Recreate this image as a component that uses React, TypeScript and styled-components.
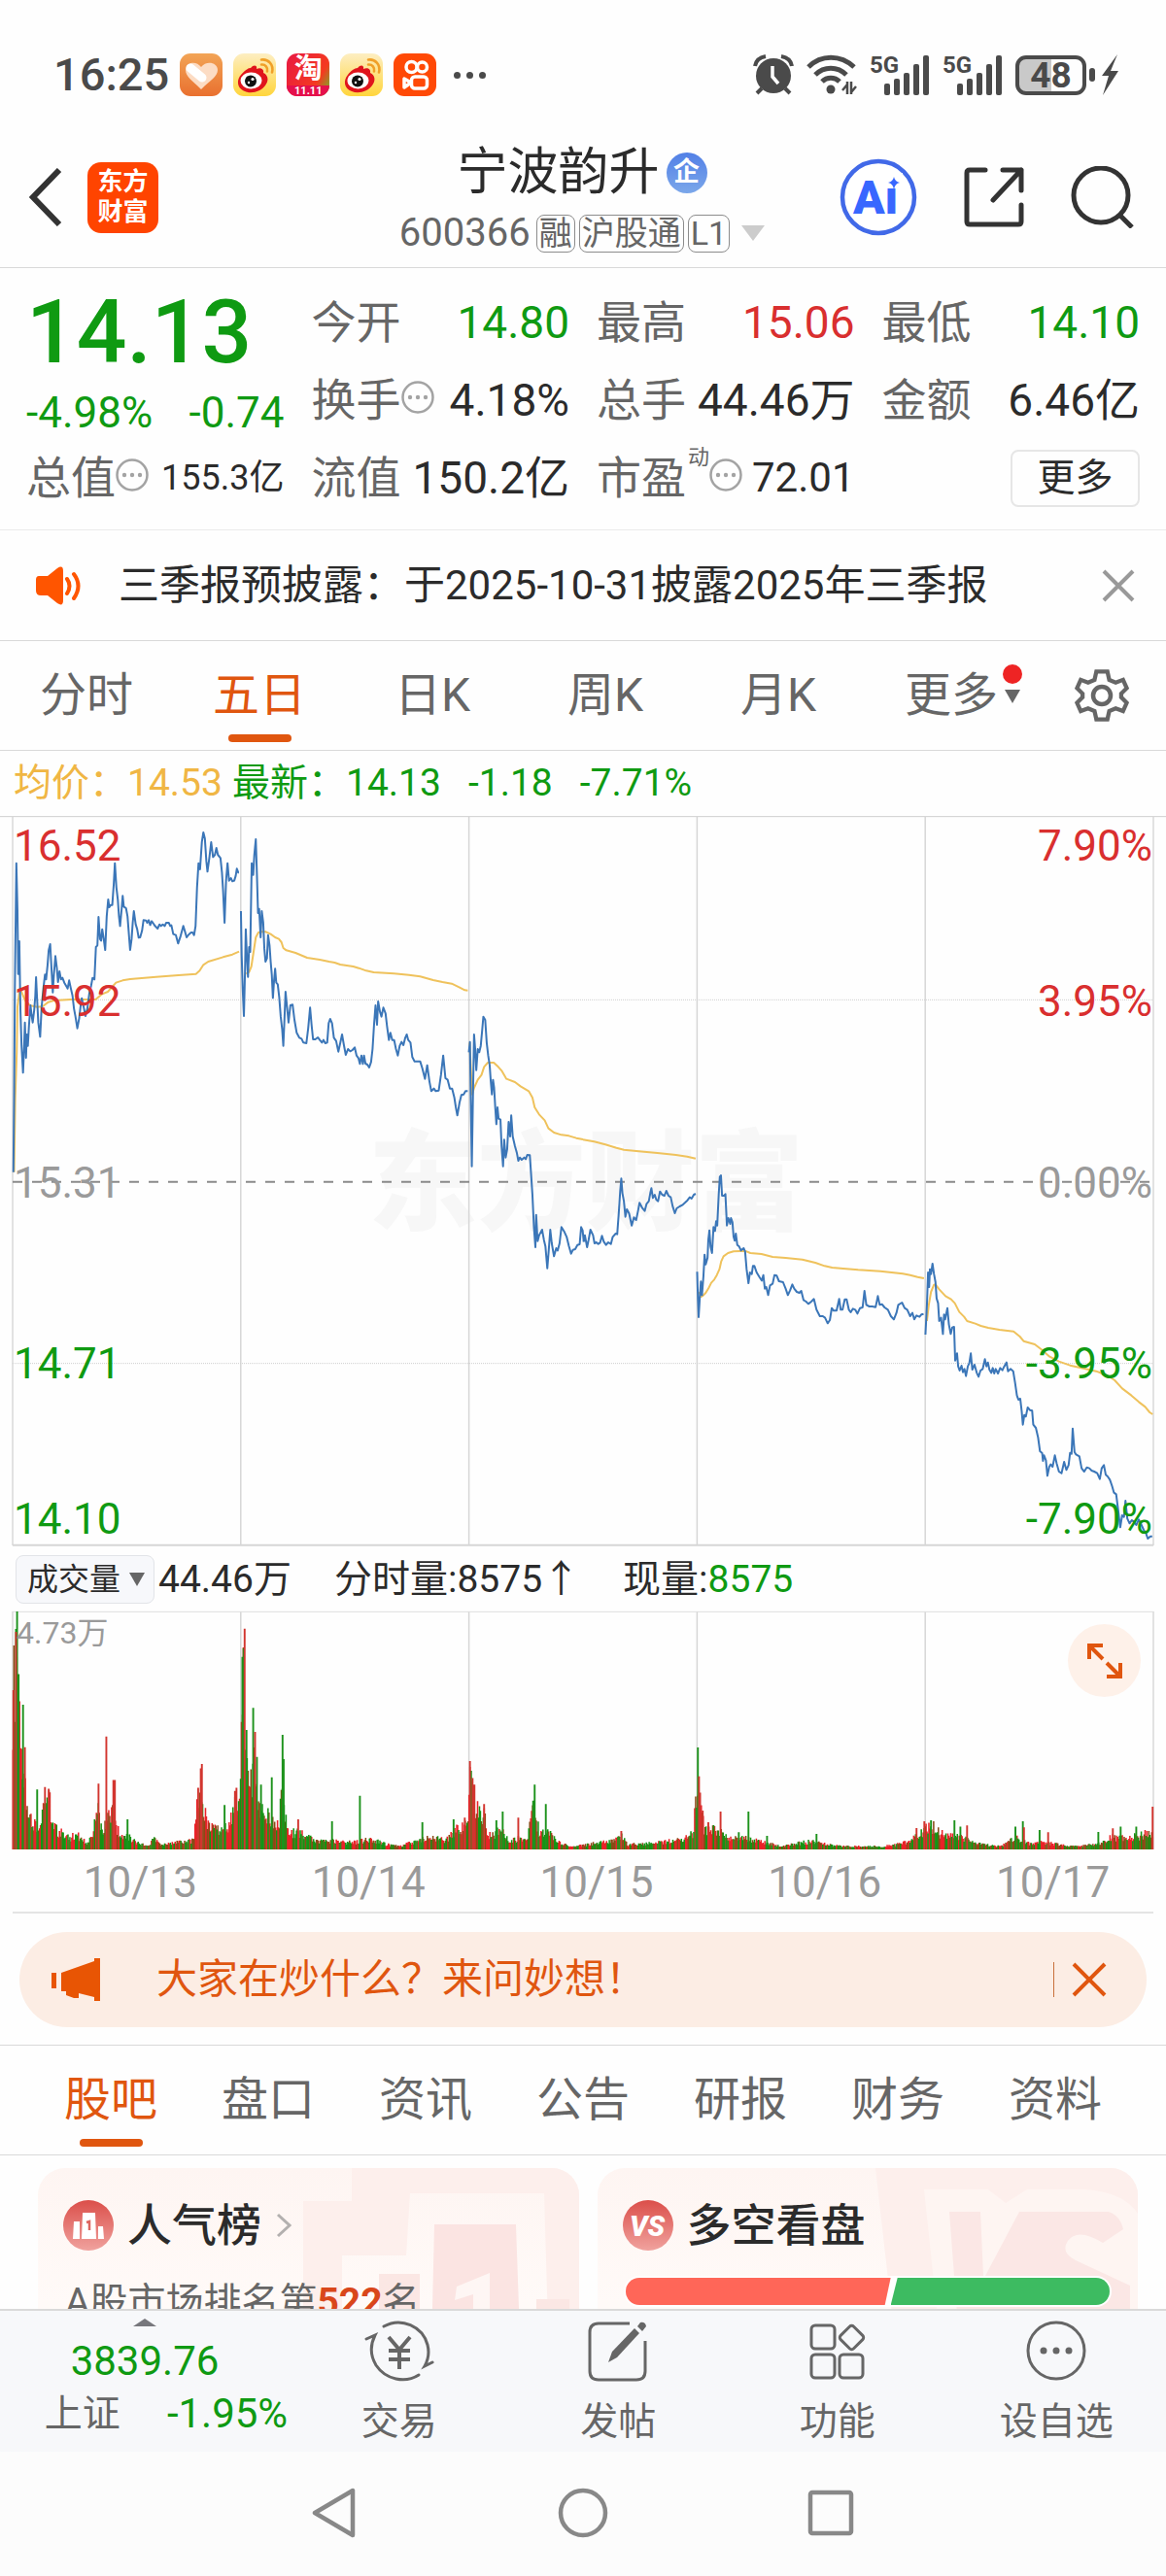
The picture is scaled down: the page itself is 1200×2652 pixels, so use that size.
import React from 'react';
import styled, { createGlobalStyle, css } from 'styled-components';

const color = {
  up: '#d92f2f',
  down: '#0f9a12',
  ink: '#2b2b2b',
  label: '#666666',
  muted: '#9a9a9a',
  line: '#d9d9d9',
  accent: '#e0560f',
  price: '#3b76b8',
  average: '#efc25c',
};

const GlobalStyle = createGlobalStyle`
  * { box-sizing: border-box; }
  body {
    margin: 0;
    background: #fefefe;
    color: ${color.ink};
    font-family: Roboto, "Noto Sans CJK SC", sans-serif;
  }
  button, select { font: inherit; color: inherit; }
  button { border: 0; padding: 0; background: none; cursor: pointer; }
  svg { display: block; flex: none; }
`;

const Page = styled.div`
  display: flex;
  flex-direction: column;
  height: 100vh;
  overflow: hidden;
`;

const Row = styled.div<{ $gap?: number }>`
  display: flex;
  align-items: center;
  gap: ${(p) => p.$gap ?? 0}px;
`;

/* ---------- status bar ---------- */

const StatusBar = styled.header`
  display: flex;
  flex: none;
  justify-content: space-between;
  align-items: center;
  padding: 55px 49px 32px 55px;
  height: 131px;
  color: #4a4a4a;
`;

const Clock = styled.time`
  font-size: 47px;
  line-height: 44px;
  font-weight: 500;
`;

const AppTile = styled.span<{ $bg: string }>`
  display: flex;
  flex-direction: column;
  align-items: center;
  width: 44px;
  height: 44px;
  border-radius: 11px;
  overflow: hidden;
  color: #fff;
  background: ${(p) => p.$bg};
`;

const TileGlyph = styled.span`
  font-size: 29px;
  line-height: 33px;
  font-weight: 700;
`;

const TileCaption = styled.span`
  width: 100%;
  background: #e5104c;
  font-size: 11px;
  line-height: 11px;
  font-weight: 700;
  text-align: center;
`;

const Dots = styled.span`
  display: flex;
  gap: 6px;
  margin-left: 7px;
  i { width: 7px; height: 7px; border-radius: 50%; background: #4a4a4a; }
`;

const Signal = styled.span`
  display: flex;
  position: relative;
  width: 62px;
  height: 41px;
  align-items: flex-start;
  svg { position: absolute; inset: 0; }
`;

const SignalText = styled.span`
  font-size: 24px;
  line-height: 20px;
  font-weight: 700;
`;

const Battery = styled.span`
  display: flex;
  align-items: center;
  justify-content: center;
  width: 73px;
  height: 41px;
  border: 4px solid #4a4a4a;
  border-radius: 11px;
  background: linear-gradient(90deg, #c9c9c9 50%, transparent 50%);
  font-size: 37px;
  line-height: 33px;
  font-weight: 700;
`;

const WeiboTile = () => (
  <AppTile $bg="linear-gradient(#fdeec2, #ffd53c)">
    <svg width="44" height="44" viewBox="0 0 44 44">
      <path d="M18 15c3-4 7-3 6 1 4-2 8 0 7 4 5 2 6 8 2 13-4 6-14 9-21 6-8-3-9-11-4-17 3-4 7-7 10-7z" fill="#e0141c" />
      <ellipse cx="18.500" cy="28" rx="11" ry="8.500" fill="#fff" />
      <circle cx="18" cy="28.500" r="6" fill="#111" />
      <circle cx="20" cy="26.500" r="1.600" fill="#fff" />
      <circle cx="16" cy="30" r="1.200" fill="#fff" />
      <path d="M29 11.500c4-.5 7 3 6 7M29 6.500c7-1 13 5 11 13" fill="none" stroke="#f0a028" strokeWidth="2.600" strokeLinecap="round" />
    </svg>
  </AppTile>
);

const SignalBars = () => (
  <Signal>
    <SignalText>5G</SignalText>
    <svg width="62" height="41" viewBox="0 0 62 41" fill="#4a4a4a">
      <rect x="15" y="29" width="6" height="12" rx="2" />
      <rect x="25" y="24" width="6" height="17" rx="2" />
      <rect x="35" y="18" width="6" height="23" rx="2" />
      <rect x="45" y="9" width="6" height="32" rx="2" />
      <rect x="55" y="0" width="6" height="41" rx="2" />
    </svg>
  </Signal>
);

/* ---------- title bar ---------- */

const TitleBar = styled.div`
  display: grid;
  flex: none;
  grid-template-columns: 1fr auto 1fr;
  align-items: center;
  height: 145px;
  padding: 0 32px 0 30px;
  border-bottom: 1px solid ${color.line};
`;

const Logo = styled.a`
  display: flex;
  width: 73px;
  height: 73px;
  align-items: center;
  justify-content: center;
  border-radius: 14px;
  background: #ff4400;
  color: #fff;
  font-size: 26px;
  line-height: 31px;
  font-weight: 700;
  text-align: center;
  text-decoration: none;
`;

const TitleBlock = styled.div`
  display: flex;
  flex-direction: column;
  align-items: center;
  padding-top: 12px;
`;

const StockName = styled.h1`
  margin: 0;
  font-size: 52px;
  line-height: 62px;
  font-weight: 400;
`;

const CorpBadge = styled.span`
  width: 42px;
  height: 42px;
  border-radius: 50%;
  background: linear-gradient(#5280e6, #7ba7ea);
  color: #fff;
  font-size: 27px;
  line-height: 40px;
  font-weight: 700;
  text-align: center;
`;

const Code = styled.span`
  font-size: 40px;
  line-height: 62px;
  color: ${color.label};
  margin-right: 2px;
`;

const Mark = styled.span`
  padding: 0 2px;
  border: 1px solid #8c8c8c;
  border-radius: 8px;
  color: ${color.label};
  font-size: 34px;
  line-height: 37px;
`;

const Triangle = styled.i<{ $w: number; $h: number; $color: string }>`
  border-left: ${(p) => p.$w}px solid transparent;
  border-right: ${(p) => p.$w}px solid transparent;
  border-top: ${(p) => p.$h}px solid ${(p) => p.$color};
`;

const Actions = styled.div`
  display: flex;
  justify-content: flex-end;
  align-items: center;
  gap: 48px;
`;

/* ---------- quote ---------- */

const Quote = styled.section`
  display: grid;
  flex: none;
  grid-template-columns: repeat(4, 1fr);
  grid-auto-rows: 80px;
  column-gap: 28px;
  padding: 16px 27px 13px;
  border-bottom: 1px solid #ebebeb;
`;

const Headline = styled.div`
  grid-row: span 2;
  color: ${color.down};
`;

const Price = styled.div`
  font-size: 91px;
  line-height: 100px;
  font-weight: 500;
`;

const Change = styled.div`
  display: flex;
  justify-content: space-between;
  font-size: 44px;
  line-height: 66px;
`;

const Cell = styled.div`
  display: flex;
  align-items: center;
  white-space: nowrap;
`;

const Label = styled.span`
  color: ${color.label};
  font-size: 46px;
  line-height: 60px;
`;

const Value = styled.span<{ $color?: string; $size?: number }>`
  margin-left: auto;
  color: ${(p) => p.$color ?? color.ink};
  font-size: ${(p) => p.$size ?? 46}px;
  line-height: 60px;
`;

const Sup = styled.sup`
  align-self: flex-start;
  margin-left: 2px;
  color: ${color.label};
  font-size: 22px;
  line-height: 38px;
`;

const MoreButton = styled.button`
  width: 133px;
  height: 59px;
  margin-left: auto;
  border: 2px solid #e6e6e6;
  border-radius: 8px;
  font-size: 39px;
  line-height: 52px;
`;

const InfoIcon = styled.svg`
  margin-bottom: 6px;
`;

const Info = () => (
  <InfoIcon width="34" height="34" viewBox="0 0 34 34">
    <circle cx="17" cy="17" r="15.500" fill="none" stroke="#a3a3a3" strokeWidth="2.500" />
    <g fill="#a3a3a3">
      <circle cx="9" cy="17" r="2.200" /><circle cx="17" cy="17" r="2.200" /><circle cx="25" cy="17" r="2.200" />
    </g>
  </InfoIcon>
);

/* ---------- notice ---------- */

const Notice = styled.div`
  display: flex;
  flex: none;
  align-items: center;
  height: 114px;
  padding: 0 32px 0 36px;
  border-bottom: 1px solid ${color.line};
  font-size: 42px;
  line-height: 60px;
  p { flex: 1; margin: 0 0 0 36px; white-space: nowrap; }
`;

/* ---------- tabs ---------- */

const Tabs = styled.nav<{ $pad?: number }>`
  display: flex;
  flex: none;
  height: 113px;
  padding: 0 ${(p) => p.$pad ?? 0}px;
  border-bottom: 1px solid ${color.line};
`;

const Tab = styled.button<{ $on?: boolean }>`
  display: flex;
  flex: 1;
  align-items: center;
  justify-content: center;
  position: relative;
  color: ${color.label};
  font-size: 48px;
  line-height: 60px;
  ${(p) =>
    p.$on &&
    css`
      color: ${color.accent};
      &::after {
        content: '';
        position: absolute;
        bottom: 8px;
        left: 50%;
        width: 65px;
        height: 8px;
        margin-left: -32px;
        border-radius: 4px;
        background: ${color.accent};
      }
    `}
`;

const SettingsTab = styled.button`
  display: flex;
  align-items: center;
  justify-content: center;
  width: 132px;
`;

const MoreMarks = styled.span`
  position: absolute;
  left: 50%;
  top: 24px;
  display: flex;
  flex-direction: column;
  align-items: center;
  gap: 6px;
  margin-left: 53px;
`;

const RedDot = styled.i`
  width: 20px;
  height: 20px;
  border-radius: 50%;
  background: #ee2424;
`;

/* ---------- chart ---------- */

const Legend = styled.div`
  display: flex;
  flex: none;
  gap: 10px;
  height: 68px;
  padding: 0 14px;
  color: ${color.down};
  font-size: 39px;
  line-height: 66px;
  b { color: #f0b644; font-weight: 400; }
  span + span { margin-left: 18px; }
`;

const Plot = styled.div<{ $height: number }>`
  position: relative;
  flex: none;
  height: ${(p) => p.$height}px;
  margin: 0 13px;
  svg.plot { position: absolute; inset: 0; width: 100%; height: 100%; overflow: visible; }
`;

const Watermark = styled.div`
  position: absolute;
  inset: 0;
  display: flex;
  align-items: center;
  justify-content: center;
  padding: 8px 0 0 6px;
  color: #f7f7f7;
  font-size: 112px;
  line-height: 120px;
  font-weight: 900;
`;

const AxisLabel = styled.span<{ $side: 'left' | 'right'; $color: string }>`
  position: absolute;
  ${(p) => p.$side}: 1px;
  transform: translateY(-50%);
  color: ${(p) => p.$color};
  font-size: 44px;
  line-height: 48px;
`;

const VolumeHead = styled.div`
  display: flex;
  flex: none;
  align-items: center;
  height: 68px;
  padding: 2px 16px 0;
  font-size: 39px;
  line-height: 60px;
  white-space: nowrap;
  em { color: ${color.down}; font-style: normal; }
  span { margin-right: 44px; }
`;

const Picker = styled.label`
  position: relative;
  display: flex;
  margin-right: 4px;
  i { position: absolute; right: 10px; top: 18px; pointer-events: none; }
`;

const PickerSelect = styled.select`
  appearance: none;
  width: 143px;
  height: 50px;
  padding: 0 0 0 11px;
  border: 1px solid #e2e4e8;
  border-radius: 8px;
  background: #f7f8fb;
  font-size: 32px;
  line-height: 46px;
`;

const VolumeMax = styled.span`
  position: absolute;
  left: 4px;
  top: 4px;
  color: ${color.muted};
  font-size: 32px;
  line-height: 36px;
`;

const ExpandButton = styled.button`
  position: absolute;
  right: 13px;
  top: 13px;
  display: flex;
  align-items: center;
  justify-content: center;
  width: 75px;
  height: 75px;
  border-radius: 50%;
  background: #fef1e9;
`;

const Dates = styled.div`
  display: flex;
  flex: none;
  height: 66px;
  margin: 0 13px;
  border-bottom: 2px solid #e4e4e4;
  span {
    flex: 1;
    padding-left: 28px;
    color: ${color.muted};
    font-size: 44px;
    line-height: 68px;
    text-align: center;
  }
`;

const DAYS = ['10/13', '10/14', '10/15', '10/16', '10/17'];

const AXIS = [
  { price: '16.52', pct: '7.90%', at: 4, color: color.up },
  { price: '15.92', pct: '3.95%', at: 25.3, color: color.up },
  { price: '15.31', pct: '0.00%', at: 50.2, color: color.muted },
  { price: '14.71', pct: '-3.95%', at: 75.1, color: color.down },
  { price: '14.10', pct: '-7.90%', at: 96.4, color: color.down },
];

// Both halves of the week are stored relative to their own origin; the second one is shifted when drawn.
const PRICE_A = [
  '36,1670 38,1440 40,1100 44,716 47,860 49,1058 52,957 55,1170 58,1280 62,1363 65,1280 67,1208 70,1317 72,1245 75,1280 78,1217 82,1155 85,1185 88,1208 92,1170 95,1125 97,1068 100,1140 103,1208 108,1252 112,1160 117,1100 121,1060 124,1075 128,1030 131,985 135,966 138,1030 142,1115 145,1060 149,1003 153,1040 156,1083 160,1050 164,1075 168,1070 173,1085 178,1095 182,1103 186,1078 190,1100 195,1125 199,1165 203,1190 208,1226 213,1195 217,1155 220,1133 225,1160 230,1188 235,1165 240,1120 245,1095 249,1070 254,1075 258,975 262,970 265,882 269,950 272,955 275,920 279,950 283,984 287,880 291,828 294,852 298,845 302,845 306,780 309,716 313,790 317,830 320,880 323,910 327,860 330,817 333,850 339,855 343,880 347,940 350,984 354,950 357,900 360,864 365,905 369,920 373,946 377,945 382,925 386,892 393,893 396,900 400,892 404,907 408,895 413,903 417,910 424,918 429,905 433,910 438,905 443,910 447,900 454,900 458,910 461,908 466,935 473,938 479,964 486,940 493,910 497,925 502,945 508,936 514,930 518,930 522,938 526,910 530,790 534,716 538,735 543,650 547,621 551,640 555,710 558,742 563,700 568,651 573,697 578,690 582,669 586,690 593,700 597,745 600,800 604,900 608,770 612,716 616,770 621,762 625,772 630,770 634,755 637,733 641,745 643,745',
  '648,864 650,1000 653,1110 656,1188 659,1050 661,920 664,1000 667,1067 670,975 673,990 677,716 681,752 684,690 688,642 691,750 694,870 697,857 701,945 704,864 708,900 711,980 714,1020 718,1010 721,938 725,970 728,1020 731,1060 734,1132 737,1080 740,1042 743,1085 747,1090 751,1130 755,1190 759,1230 762,1280 765,1200 768,1113 772,1160 776,1208 781,1155 787,1153 792,1200 798,1240 805,1255 811,1258 816,1270 824,1272 829,1225 834,1162 838,1215 842,1260 848,1260 855,1254 860,1262 866,1270 870,1262 875,1272 880,1270 884,1210 888,1197 893,1210 898,1255 904,1265 910,1298 915,1272 920,1245 925,1278 930,1308 936,1290 942,1297 948,1293 954,1285 959,1310 964,1318 968,1336 972,1310 976,1336 979,1310 983,1335 988,1338 993,1347 998,1330 1002,1290 1006,1215 1010,1155 1014,1215 1017,1143 1022,1175 1026,1190 1031,1162 1037,1180 1041,1220 1046,1262 1050,1240 1055,1262 1060,1262 1065,1290 1070,1310 1075,1280 1080,1268 1085,1278 1090,1255 1094,1245 1098,1262 1104,1270 1109,1315 1115,1328 1130,1328 1136,1350 1143,1382 1149,1340 1155,1390 1160,1420 1167,1412 1172,1420 1180,1418 1186,1370 1192,1310 1198,1380 1204,1385 1210,1412 1216,1412 1222,1440 1226,1470 1230,1495 1236,1455 1241,1432 1247,1430 1252,1420 1258,1420',
  '1261,1300 1264,1268 1266,1440 1269,1652 1272,1440 1275,1245 1278,1290 1281,1355 1285,1290 1289,1300 1293,1280 1297,1230 1300,1190 1305,1200 1309,1270 1313,1310 1317,1340 1320,1390 1323,1430 1326,1385 1329,1410 1332,1470 1335,1522 1338,1470 1341,1505 1346,1508 1349,1590 1353,1652 1356,1570 1360,1625 1364,1600 1368,1515 1372,1560 1375,1495 1379,1560 1385,1590 1390,1610 1394,1635 1398,1625 1403,1632 1410,1625 1414,1630 1418,1617 1425,1618 1428,1670 1432,1740 1436,1840 1440,1902 1442,1802 1446,1883 1450,1865 1458,1848 1463,1880 1467,1900 1472,1967 1476,1910 1480,1848 1484,1890 1490,1930 1496,1905 1500,1912 1505,1890 1510,1840 1518,1855 1524,1870 1530,1898 1536,1922 1541,1910 1547,1908 1553,1895 1559,1893 1563,1840 1567,1850 1570,1885',
];
const PRICE_B = [
  '2,445 5,425 11,462 15,440 20,408 27,425 31,450 36,447 41,452 46,448 51,427 56,445 62,455 68,447 75,452 80,430 88,420 92,422 96,360 100,290 103,250 106,295 110,320 114,368 118,345 124,358 131,395 137,370 143,378 148,350 152,325 159,340 166,350 171,328 177,320 181,295 184,280 188,310 193,300 197,315 202,320 207,290 213,300 219,303 224,288 230,303 236,308 241,335 247,357 252,342 260,336 267,332 274,325 281,317 287,308 292,312 298,300 303,297',
  '307,538 309,620 311,678 314,620 317,568 320,610 324,550 327,485 330,515 335,495 337,440 340,410 343,460 347,480 351,400 355,412 358,382 361,395 365,300 368,245 371,240 374,303 379,303 383,298 387,395 391,372 396,390 398,372 402,385 405,430 408,442 411,420 415,455 420,460 425,472 432,465 436,475 440,530 445,573 449,540 454,545 457,520 461,520 467,540 475,555 481,565 485,548 489,590 493,585 498,610 503,580 510,575 515,548 521,550 527,567 538,570 545,590 551,610 557,595 563,577 568,590 575,600 582,603 587,597 593,625 600,630 606,637 614,630 621,622 628,655 637,675 645,675 651,680 658,697 664,687 669,650 674,658 682,658 689,622 693,655 698,655 704,623 709,623 715,655 720,663 726,652 732,655 738,667 745,650 752,648 757,597 762,640 770,645 778,645 787,647 793,613 798,640 804,638 811,648 820,655 828,675 836,685 843,665 848,640 858,633 865,650 872,655 880,675 886,665 891,685 897,673 905,677 910,670 916,668',
  '921,732 925,640 928,540 931,585 933,530 936,545 940,513 944,545 948,570 951,620 955,635 958,690 963,680 968,730 971,670 974,685 980,650 984,700 989,730 993,710 998,708 1001,812 1006,790 1009,830 1013,843 1018,828 1022,848 1026,838 1030,860 1035,830 1039,820 1043,790 1047,840 1053,825 1059,850 1064,862 1069,843 1075,838 1081,808 1085,830 1089,818 1093,840 1098,850 1102,835 1106,852 1110,838 1116,852 1122,835 1128,842 1133,830 1139,818 1143,845 1150,838 1157,845 1162,880 1167,920 1171,933 1176,930 1180,970 1183,1010 1187,980 1191,985 1196,957 1202,965 1208,967 1211,1010 1218,1020 1224,1050 1229,1092 1235,1098 1237,1122 1240,1105 1245,1120 1249,1168 1254,1140 1258,1133 1263,1140 1269,1105 1274,1130 1280,1155 1287,1160 1294,1125 1300,1150 1306,1135 1310,1097 1314,1100 1317,1022 1322,1095 1326,1102 1335,1108 1341,1145 1348,1155 1355,1142 1362,1145 1368,1152 1375,1155 1383,1160 1390,1178 1395,1145 1401,1135 1406,1165 1411,1170 1417,1180 1423,1200 1428,1220 1434,1225 1440,1280 1445,1327 1450,1290 1455,1295 1459,1245 1464,1300 1470,1315 1476,1305 1482,1310 1488,1320 1495,1303 1502,1320 1508,1335 1514,1345 1519,1362 1526,1355 1531,1355',
];
const AVERAGE_A = [
  '38,1670 41,1440 45,1300 47,1160 52,1115 57,1110 62,1125 68,1140 80,1155 100,1160 115,1158 130,1145 145,1140 190,1137 257,1137 275,1120 290,1113 312,1085 330,1078 350,1074 420,1067 480,1062 527,1058 537,1048 547,1030 560,1020 600,1006 625,998 643,989',
  '662,1058 670,1052 676,1035 682,990 688,945 695,930 705,928 715,928 728,935 740,945 750,950 757,960 762,978 770,985 795,993 826,1008 860,1014 885,1020 900,1023 915,1029 950,1035 965,1040 985,1048 1005,1053 1060,1057 1100,1061 1130,1066 1165,1077 1190,1083 1215,1088 1235,1099 1250,1108 1258,1109',
  '1263,1270 1270,1430 1275,1410 1285,1385 1295,1370 1302,1345 1312,1332 1328,1332 1340,1345 1350,1358 1362,1382 1385,1392 1400,1405 1422,1420 1432,1440 1438,1470 1450,1492 1465,1510 1475,1535 1490,1548 1510,1555 1530,1558 1550,1565 1568,1569',
];
const AVERAGE_B = [
  '0,130 30,136 60,145 90,155 110,161 150,166 200,171 250,177 280,182 303,188',
  '312,600 318,615 324,610 330,603 338,588 345,572 353,562 360,548 367,530 372,505 378,490 390,480 405,475 425,474 440,475 450,480 480,483 510,492 545,495 590,500 625,510 650,520 670,525 700,528 740,532 800,536 830,540 860,544 880,548 900,554 917,558',
  '925,690 930,640 936,600 944,578 948,577 958,592 975,613 990,623 1000,635 1012,662 1025,677 1033,690 1055,698 1070,705 1090,711 1120,717 1158,722 1175,738 1185,752 1215,762 1232,777 1255,800 1280,815 1310,827 1340,835 1380,845 1410,858 1430,873 1450,898 1475,920 1495,940 1512,955 1524,972 1532,978',
];

const Series = ({ parts, stroke, width }: { parts: string[]; stroke: string; width: number }) => (
  <>
    {parts.map((p) => (
      <polyline key={p.slice(0, 12)} points={p} fill="none" stroke={stroke} strokeWidth={width} strokeLinejoin="round" vectorEffect="non-scaling-stroke" />
    ))}
  </>
);

const dividers = [1, 2, 3, 4].map((i) => 34 + i * 613.6);

const Grid = ({ top, bottom }: { top: number; bottom: number }) => (
  <g stroke="#d6d6d6" strokeWidth="1.500" fill="none">
    {dividers.map((x) => (
      <line key={x} x1={x} x2={x} y1={top} y2={bottom} vectorEffect="non-scaling-stroke" />
    ))}
    <line x1="34" x2="34" y1={top} y2={bottom} stroke="#e2e2e2" strokeWidth="2" vectorEffect="non-scaling-stroke" />
    <line x1="3102" x2="3102" y1={top} y2={bottom} stroke="#e2e2e2" strokeWidth="2" vectorEffect="non-scaling-stroke" />
  </g>
);

const PriceChart = () => (
  <Plot $height={750}>
    <Watermark aria-hidden="true">东方财富</Watermark>
    <svg className="plot" viewBox="34 573 3068 2250" preserveAspectRatio="none">
      <Grid top={573} bottom={2823} />
      <g strokeWidth="1" stroke="#cfcfcf">
        <line x1="0" x2="3136" y1="572" y2="572" vectorEffect="non-scaling-stroke" />
        <line x1="34" x2="3102" y1="1138" y2="1138" strokeDasharray="1 1" vectorEffect="non-scaling-stroke" />
        <line x1="34" x2="3102" y1="2261" y2="2261" strokeDasharray="1 1" vectorEffect="non-scaling-stroke" />
        <line x1="34" x2="3102" y1="1700" y2="1700" stroke="#8a8a8a" strokeWidth="2" strokeDasharray="10 10" vectorEffect="non-scaling-stroke" />
        <line x1="34" x2="3102" y1="2822" y2="2822" stroke="#d6d6d6" strokeWidth="2" vectorEffect="non-scaling-stroke" />
      </g>
      <Series parts={AVERAGE_A} stroke={color.average} width={2} />
      <Series parts={PRICE_A} stroke={color.price} width={2} />
      <g transform="translate(1568 1440)">
        <Series parts={AVERAGE_B} stroke={color.average} width={2} />
        <Series parts={PRICE_B} stroke={color.price} width={2} />
      </g>
    </svg>
    {AXIS.map((a) => (
      <React.Fragment key={a.price}>
        <AxisLabel $side="left" $color={a.color} style={{ top: `${a.at}%` }}>{a.price}</AxisLabel>
        <AxisLabel $side="right" $color={a.color} style={{ top: `${a.at}%` }}>{a.pct}</AxisLabel>
      </React.Fragment>
    ))}
  </Plot>
);

const ENVELOPE: [number, number][] = [
  [34, 490], [40, 620], [46, 640], [50, 430], [58, 340], [64, 310], [70, 200], [76, 110], [90, 90], [110, 85], [120, 160], [135, 150], [143, 70], [160, 60], [190, 40], [205, 50], [235, 20], [250, 60], [260, 150], [270, 90], [280, 70], [290, 110], [305, 130], [312, 80], [325, 45], [360, 35], [370, 20], [400, 15], [415, 35], [430, 15], [480, 25], [522, 30], [530, 150], [545, 150], [560, 80], [590, 60], [610, 70], [630, 130], [645, 190],
  [648, 400], [655, 560], [660, 330], [668, 200], [676, 230], [685, 310], [692, 190], [705, 120], [720, 110], [735, 90], [750, 80], [760, 240], [767, 100], [780, 50], [800, 60], [830, 40], [850, 25], [900, 30], [920, 25], [960, 25], [1000, 35], [1030, 20], [1075, 10], [1110, 25], [1150, 40], [1200, 30], [1225, 65], [1258, 80],
  [1262, 230], [1270, 210], [1280, 130], [1300, 120], [1315, 50], [1350, 60], [1370, 30], [1420, 40], [1435, 140], [1450, 60], [1480, 50], [1500, 25], [1530, 10], [1568, 15], [1610, 22], [1650, 28], [1672, 45], [1690, 15], [1750, 20], [1820, 30], [1840, 30], [1865, 60],
  [1875, 210], [1882, 140], [1895, 70], [1940, 60], [1960, 35], [2010, 35], [2050, 25], [2100, 10], [2170, 25], [2200, 25], [2240, 12], [2300, 10], [2370, 10], [2420, 18], [2450, 30], [2486, 60],
  [2489, 70], [2510, 75], [2540, 45], [2590, 40], [2620, 20], [2690, 10], [2730, 40], [2770, 20], [2800, 25], [2860, 14], [2900, 10], [2960, 20], [2990, 40], [3040, 40], [3080, 50], [3101, 60],
];

const SPIKES_DOWN: [number, number][] = [
  [46, 733], [50, 540], [62, 446], [100, 185], [130, 150], [343, 93], [604, 137], [652, 593], [655, 620], [663, 368], [681, 436], [691, 285], [731, 222], [760, 353], [763, 278], [702, 200], [893, 87], [968, 165], [1136, 84], [1220, 93], [1267, 242], [1335, 90], [1352, 117], [1438, 200], [1434, 150], [1468, 140], [1877, 314], [1987, 53], [2013, 117], [2063, 42], [2196, 48], [2504, 90], [2567, 90], [2583, 70], [2731, 70], [2751, 87], [2796, 60], [2954, 54], [3014, 70], [3056, 70],
];
const SPIKES_UP: [number, number][] = [
  [36, 491], [43, 670], [67, 315], [121, 192], [131, 187], [265, 203], [286, 348], [305, 214], [309, 214], [533, 190], [540, 250], [543, 263], [632, 180], [636, 190], [658, 680], [686, 362], [802, 93], [1250, 98], [1264, 272], [1271, 220], [1276, 200], [1302, 140], [1394, 98], [1671, 57], [1880, 225], [1883, 175], [1890, 120], [1905, 84], [1938, 117], [2465, 66], [2486, 87], [2601, 74], [2754, 68], [2819, 53], [2993, 65], [3100, 132],
];

const BASE = 941;
const bar = (x: number, h: number) => `M${x.toFixed(1)} ${BASE}v${-h.toFixed(0)}`;

function buildVolume() {
  let seed = 17;
  const rand = () => {
    seed = (seed * 16807) % 2147483647;
    return seed / 2147483647;
  };
  const layers = { up: '', down: '', mixed: '' };
  let k = 0;
  for (let x = 35; x < 3101; x += 2.55) {
    while (k < ENVELOPE.length - 2 && ENVELOPE[k + 1][0] < x) k += 1;
    const [x0, h0] = ENVELOPE[k];
    const [x1, h1] = ENVELOPE[k + 1];
    const base = h0 + ((h1 - h0) * (x - x0)) / (x1 - x0);
    const h = Math.max(7, base * (0.6 + rand() * 0.6));
    const pick = rand();
    layers[pick < 0.42 ? 'up' : pick < 0.76 ? 'down' : 'mixed'] += bar(x, h);
  }
  return layers;
}

const volume = buildVolume();
const joinBars = (list: [number, number][]) => list.map(([x, h]) => bar(x, h)).join('');

const VolumeChart = () => (
  <Plot $height={245}>
    <svg className="plot" viewBox="34 208 3068 733" preserveAspectRatio="none">
      <Grid top={208} bottom={941} />
      <line x1="34" x2="3102" y1="209" y2="209" stroke="#dedede" strokeWidth="1" vectorEffect="non-scaling-stroke" />
      <g fill="none" strokeWidth="4">
        <path d={volume.up} stroke="#ea2228" />
        <path d={volume.mixed} stroke="#8a4a16" />
        <path d={volume.down} stroke="#149413" />
        <path d={joinBars(SPIKES_DOWN)} stroke="#1d921c" strokeWidth="5" />
        <path d={joinBars(SPIKES_UP)} stroke="#d2352f" strokeWidth="5" />
      </g>
    </svg>
    <VolumeMax>4.73万</VolumeMax>
    <ExpandButton aria-label="全屏">
      <svg width="38" height="38" viewBox="0 0 38 38" fill="none" stroke={color.accent} strokeWidth="4">
        <path d="M3 17V3h14M3 3l14 14M35 21v14H21M35 35L21 21" />
      </svg>
    </ExpandButton>
  </Plot>
);

/* ---------- banner ---------- */

const Banner = styled.div`
  display: flex;
  flex: none;
  align-items: center;
  height: 98px;
  margin: 19px 20px 18px;
  padding: 0 41px 0 33px;
  border-radius: 49px;
  background: #fcede4;
  color: ${color.accent};
  font-size: 42px;
  line-height: 60px;
  a { flex: 1; margin-left: 58px; color: inherit; text-decoration: none; }
  button { padding-left: 18px; border-left: 1px solid #c9713c; }
`;

const Rule = styled.hr`
  flex: none;
  width: 100%;
  height: 1px;
  margin: 0;
  border: 0;
  background: ${color.line};
`;

/* ---------- cards ---------- */

const Cards = styled.section`
  display: grid;
  flex: 1;
  min-height: 0;
  grid-template-columns: 1fr 1fr;
  align-items: start;
  gap: 19px;
  padding: 13px 29px 0 39px;
  overflow: hidden;
`;

const Card = styled.article`
  position: relative;
  height: 230px;
  padding: 28px 26px 0;
  border-radius: 28px;
  background: linear-gradient(#fef5f2, #fffaf8 60%);
  overflow: hidden;
  > svg { position: absolute; right: 0; top: 0; }
`;

const CardHead = styled.h2`
  display: flex;
  position: relative;
  align-items: center;
  margin: 0;
  font-size: 46px;
  line-height: 62px;
  font-weight: 500;
  svg:first-child { margin-right: 14px; }
  svg:last-child:not(:first-child) { margin-left: 14px; }
`;

const Ranking = styled.p`
  position: relative;
  margin: 18px 0 0 2px;
  color: ${color.label};
  font-size: 39px;
  line-height: 60px;
  b { color: #d9471b; }
`;

const Balance = styled.div`
  display: flex;
  position: relative;
  height: 32px;
  margin: 21px 1px 0 1px;
  border: 2px solid #fff;
  border-radius: 16px;
  background: #fff;
  overflow: hidden;
`;

const BalancePart = styled.span<{ $share: number; $color: string; $clip: string }>`
  flex: ${(p) => p.$share};
  background: ${(p) => p.$color};
  clip-path: ${(p) => p.$clip};
`;

/* ---------- bottom bar ---------- */

const BottomBar = styled.nav`
  display: grid;
  flex: none;
  grid-template-columns: 298px repeat(4, 1fr);
  height: 147px;
  border-top: 2px solid ${color.line};
  background: #f7f8fa;
`;

const IndexCell = styled.button`
  display: flex;
  flex-direction: column;
  align-items: center;
  padding-top: 8px;
  color: ${color.down};
  font-size: 42px;
  line-height: 54px;
`;

const IndexRow = styled.span`
  display: flex;
  gap: 48px;
  padding-left: 44px;
  span { color: ${color.label}; font-size: 39px; }
`;

const UpMark = styled.i`
  border-left: 12px solid transparent;
  border-right: 12px solid transparent;
  border-bottom: 8px solid #77777c;
  margin-bottom: 9px;
`;

const NavItem = styled.button`
  display: flex;
  flex-direction: column;
  align-items: center;
  gap: 14px;
  padding-top: 7px;
  color: ${color.label};
  font-size: 39px;
  line-height: 50px;
`;

const SystemNav = styled.footer`
  display: flex;
  flex: none;
  justify-content: center;
  gap: 203px;
  height: 128px;
  padding-top: 37px;
  background: #fcfcfc;
  button { height: 52px; }
`;

const stroke = { fill: 'none', stroke: '#333', strokeWidth: 5 } as const;
const thin = { fill: 'none', stroke: '#666', strokeWidth: 3 } as const;

const NAV = [
  {
    name: '交易',
    icon: (
      <svg width="72" height="68" viewBox="0 0 72 68" {...thin} strokeLinecap="round">
        <path d="M20 9C38-1 60 9 65 28c2 8 1 15-3 22l8-4M56 59C42 68 22 64 12 49 6 39 6 28 11 18l-9 4" />
        <path d="M25 20l11 13 11-13M36 33v20M25 34h22M25 43h22" strokeWidth="4" strokeLinecap="butt" />
      </svg>
    ),
  },
  {
    name: '发帖',
    icon: (
      <svg width="72" height="68" viewBox="0 0 72 68" {...thin}>
        <path d="M48 6H16q-9 0-9 9v40q0 9 9 9h39q9 0 9-9V24" />
        <path d="M26 46l4-11 23-24 5 5-23 25z" fill="#666" stroke="none" />
        <path d="M56 9l3-4q5-1 6 4l-4 5z" fill="#666" stroke="none" />
      </svg>
    ),
  },
  {
    name: '功能',
    icon: (
      <svg width="72" height="68" viewBox="0 0 72 68" {...thin}>
        <rect x="9" y="8" width="24" height="24" rx="4" />
        <rect x="9" y="38" width="24" height="24" rx="4" />
        <rect x="38" y="38" width="24" height="24" rx="4" />
        <rect x="41" y="11" width="19" height="19" rx="3" transform="rotate(45 50.500 20.500)" />
      </svg>
    ),
  },
  {
    name: '设自选',
    icon: (
      <svg width="72" height="68" viewBox="0 0 72 68" {...thin}>
        <circle cx="36" cy="34" r="29" />
        <g fill="#666" stroke="none"><circle cx="23" cy="34" r="3.500" /><circle cx="36" cy="34" r="3.500" /><circle cx="49" cy="34" r="3.500" /></g>
      </svg>
    ),
  },
];

const SECTIONS = ['股吧', '盘口', '资讯', '公告', '研报', '财务', '资料'];

export default function App() {
  return (
    <Page>
      <GlobalStyle />
      <StatusBar>
        <Row $gap={11}>
          <Clock>16:25</Clock>
          <AppTile $bg="linear-gradient(#f2a456, #e9702f)">
            <svg width="44" height="44" viewBox="0 0 44 44">
              <path d="M22 37C13 28 6 24 6 17c0-8 11-10 16-3 5-7 17-5 17 3 0 7-8 11-17 20z" fill="#fcdcc4" />
              <path d="M11 15l12 10" stroke="#fff" strokeWidth="9" strokeLinecap="round" />
            </svg>
          </AppTile>
          <WeiboTile />
          <AppTile $bg="linear-gradient(120deg, #e81842, #f43a20 70%, #5ec52c)">
            <TileGlyph>淘</TileGlyph>
            <TileCaption>11.11</TileCaption>
          </AppTile>
          <WeiboTile />
          <AppTile $bg="#ff4906">
            <svg width="44" height="44" viewBox="0 0 44 44" fill="none" stroke="#fff" strokeWidth="3.500">
              <circle cx="18.500" cy="14" r="5.500" />
              <circle cx="29.500" cy="14" r="5" />
              <rect x="18.500" y="24" width="16" height="12" rx="3.500" />
              <path d="M18 30l-7-4v9z" strokeLinejoin="round" />
            </svg>
          </AppTile>
          <Dots><i /><i /><i /></Dots>
        </Row>
        <Row $gap={13}>
          <svg width="42" height="42" viewBox="0 0 42 42">
            <circle cx="21" cy="22" r="18" fill="#4a4a4a" />
            <path d="M2 12c1-6 5-9 11-10M40 12c-1-6-5-9-11-10M9 35l-5 5M33 35l5 5" stroke="#4a4a4a" strokeWidth="4" fill="none" />
            <path d="M20 12v11l6 7" fill="none" stroke="#fff" strokeWidth="3.500" />
          </svg>
          <svg width="52" height="42" viewBox="0 0 52 42" fill="none" stroke="#4a4a4a" strokeWidth="5">
            <path d="M2 13C15 0 35 0 49 13M9 21c9-9 23-9 32 0M16 28c5-5 13-5 18 0" />
            <circle cx="25" cy="36" r="4.500" fill="#4a4a4a" stroke="none" />
            <path d="M37 37l5-6M42 28v13M46 28v13M46 39l5-6" strokeWidth="2.500" />
          </svg>
          <SignalBars />
          <SignalBars />
          <Row $gap={3}>
            <Battery>48</Battery>
            <svg width="30" height="42" viewBox="0 0 30 42" fill="#4a4a4a">
              <rect x="0" y="14" width="6" height="14" rx="3" />
              <path d="M29 0L13 22h7l-6 20 16-25h-8z" />
            </svg>
          </Row>
        </Row>
      </StatusBar>

      <TitleBar>
        <Row $gap={26}>
          <button aria-label="返回">
            <svg width="34" height="60" viewBox="0 0 34 60" {...stroke} strokeWidth={6}>
              <path d="M31 2L4 30l27 28" />
            </svg>
          </button>
          <Logo href="#">东方<br />财富</Logo>
        </Row>
        <TitleBlock>
          <Row $gap={7}>
            <StockName>宁波韵升</StockName>
            <CorpBadge>企</CorpBadge>
          </Row>
          <Row $gap={4}>
            <Code>600366</Code>
            <Mark>融</Mark>
            <Mark>沪股通</Mark>
            <Mark>L1</Mark>
            <Row style={{ marginLeft: 8 }}><Triangle $w={12} $h={16} $color="#cccccc" /></Row>
          </Row>
        </TitleBlock>
        <Actions>
          <button aria-label="AI">
            <svg width="80" height="80" viewBox="0 0 80 80">
              <circle cx="40" cy="40" r="37" fill="#fff" stroke="#4169e8" strokeWidth="4.500" />
              <text x="14" y="57" fontFamily="Roboto, sans-serif" fontSize="48" fontWeight="900" fill="#3867ff">Ai</text>
              <rect x="47" y="15" width="18" height="14" fill="#fff" />
              <path d="M56 19q1 5 6 6-5 1-6 7-1-6-6-7 5-1 6-6z" fill="#3867ff" />
            </svg>
          </button>
          <button aria-label="分享">
            <svg width="62" height="62" viewBox="0 0 62 62" {...stroke} strokeLinejoin="round" strokeLinecap="round">
              <path d="M22 3H6q-3 0-3 3v50q0 3 3 3h50q3 0 3-3V39M40 3h19v21M59 3L30 34" />
            </svg>
          </button>
          <button aria-label="搜索">
            <svg width="66" height="64" viewBox="0 0 66 64" {...stroke}>
              <circle cx="31" cy="30" r="28" />
              <path d="M50 50l13 13" />
            </svg>
          </button>
        </Actions>
      </TitleBar>

      <Quote>
        <Headline>
          <Price>14.13</Price>
          <Change><span>-4.98%</span><span>-0.74</span></Change>
        </Headline>
        <Cell><Label>今开</Label><Value $color={color.down}>14.80</Value></Cell>
        <Cell><Label>最高</Label><Value $color={color.up}>15.06</Value></Cell>
        <Cell><Label>最低</Label><Value $color={color.down}>14.10</Value></Cell>
        <Cell><Label>换手</Label><Info /><Value>4.18%</Value></Cell>
        <Cell><Label>总手</Label><Value>44.46万</Value></Cell>
        <Cell><Label>金额</Label><Value>6.46亿</Value></Cell>
        <Cell><Label>总值</Label><Info /><Value $size={36}>155.3亿</Value></Cell>
        <Cell><Label>流值</Label><Value>150.2亿</Value></Cell>
        <Cell><Label>市盈</Label><Sup>动</Sup><Info /><Value $size={42}>72.01</Value></Cell>
        <Cell><MoreButton>更多</MoreButton></Cell>
      </Quote>

      <Notice>
        <svg width="50" height="42" viewBox="0 0 50 42">
          <path d="M4 11h9L23 3q6-4 6 3v30q0 7-6 3l-10-8H6q-5 0-5-5V15q0-4 3-4z" fill="#ff5500" />
          <path d="M33 14q5 7 0 15M40 9q9 12 0 25" fill="none" stroke="#ff5500" strokeWidth="4" strokeLinecap="round" />
        </svg>
        <p>三季报预披露：于2025-10-31披露2025年三季报</p>
        <button aria-label="关闭">
          <svg width="34" height="34" viewBox="0 0 34 34" fill="none" stroke="#999" strokeWidth="4">
            <path d="M2 2l30 30M32 2L2 32" />
          </svg>
        </button>
      </Notice>

      <Tabs>
        {['分时', '五日', '日K', '周K', '月K'].map((t) => (
          <Tab key={t} $on={t === '五日'}>{t}</Tab>
        ))}
        <Tab>
          更多
          <MoreMarks><RedDot /><Triangle $w={8} $h={14} $color="#666" /></MoreMarks>
        </Tab>
        <SettingsTab aria-label="设置">
          <svg width="56" height="58" viewBox="0 0 56 58" fill="none" stroke="#666" strokeWidth="4.500">
            <path d="M22 3h12l2 9 7 3 8-3 4 9-6 6v4l6 6-4 9-8-3-7 3-2 9H22l-2-9-7-3-8 3-4-9 6-6v-4l-6-6 4-9 8 3 7-3z" transform="translate(1.500 1.500) scale(.947)" />
            <circle cx="28" cy="29" r="9" />
          </svg>
        </SettingsTab>
      </Tabs>

      <Legend>
        <b>均价：14.53</b>
        <span>最新：14.13</span>
        <span>-1.18</span>
        <span>-7.71%</span>
      </Legend>

      <PriceChart />

      <VolumeHead>
        <Picker aria-label="指标">
          <PickerSelect defaultValue="成交量"><option>成交量</option></PickerSelect>
          <Triangle $w={8} $h={14} $color="#666" />
        </Picker>
        <span>44.46万</span>
        <span>分时量:8575↑</span>
        <span>现量:<em>8575</em></span>
      </VolumeHead>
      <VolumeChart />
      <Dates>{DAYS.map((d) => <span key={d}>{d}</span>)}</Dates>

      <Banner>
        <svg width="50" height="44" viewBox="0 0 50 44" fill="#e85504">
          <path d="M0 15h5v16H0zM10 15L44 3V0h6v44h-6v-4l-16-4v5h-5l-8-3v-4h-5z" />
        </svg>
        <a href="#">大家在炒什么？来问妙想！</a>
        <button aria-label="关闭">
          <svg width="36" height="36" viewBox="0 0 36 36" fill="none" stroke={color.accent} strokeWidth="4">
            <path d="M2 2l32 32M34 2L2 34" />
          </svg>
        </button>
      </Banner>
      <Rule />

      <Tabs $pad={33}>
        {SECTIONS.map((t) => (
          <Tab key={t} $on={t === '股吧'}>{t}</Tab>
        ))}
      </Tabs>

      <Cards>
        <Card>
          <svg width="284" height="230" viewBox="0 0 284 230">
            <path d="M0 34h50V0h234v230h-30l-6-204H110l-4 64H40v64H0z" fill="#fdefec" />
            <path d="M135 58h84l6 172h-94z" fill="#fbe4e2" />
            <path d="M158 122l34-14v80h-17v-58l-19 6z" fill="#fef6f4" />
            <path d="M78 109h42v121H78zM240 135h34v95h-34z" fill="#fbe7e4" />
          </svg>
          <CardHead>
            <svg width="52" height="52" viewBox="0 0 52 52">
              <defs><linearGradient id="rank" x2="0" y2="1"><stop stopColor="#db4f4a" /><stop offset="1" stopColor="#f0a29e" /></linearGradient></defs>
              <circle cx="26" cy="26" r="26" fill="url(#rank)" />
              <path d="M11 22h6v18h-7zM20 13h13l1 27H19zM36 27h5l1 13h-6z" fill="#fff" />
              <path d="M24 23l3-1v9" fill="none" stroke="#dd6660" strokeWidth="2.500" />
            </svg>
            人气榜
            <svg width="18" height="26" viewBox="0 0 18 26" fill="none" stroke="#b3b0af" strokeWidth="3">
              <path d="M3 2l12 11L3 24" />
            </svg>
          </CardHead>
          <Ranking>A股市场排名第<b>522</b>名</Ranking>
        </Card>
        <Card>
          <svg width="270" height="230" viewBox="0 0 270 230">
            <path d="M0 0h270v230H26z" fill="#fdefec" />
            <path d="M50 22h66l18 14 22-14h60q40 3 54 25v183H72z" fill="#fef5f2" />
            <path d="M76 45h32l3 66h2l35-66h92q12 4 15 18l-21 14q-26-16-36-2-8 12 8 20l56 26v109H90z" fill="#fbe7e5" />
          </svg>
          <CardHead>
            <svg width="52" height="52" viewBox="0 0 52 52">
              <circle cx="26" cy="26" r="26" fill="url(#rank)" />
              <text x="25" y="37" textAnchor="middle" fontFamily="Roboto, sans-serif" fontSize="29" fontWeight="900" fontStyle="italic" fill="#fff">VS</text>
            </svg>
            多空看盘
          </CardHead>
          <Balance>
            <BalancePart $share={274} $color="#ff6658" $clip="polygon(0 0, 100% 0, calc(100% - 6px) 100%, 0 100%)" />
            <BalancePart $share={226} $color="#3dbb61" $clip="polygon(7px 0, 100% 0, 100% 100%, 0 100%)" />
          </Balance>
        </Card>
      </Cards>

      <BottomBar>
        <IndexCell>
          <UpMark />
          <span>3839.76</span>
          <IndexRow><span>上证</span>-1.95%</IndexRow>
        </IndexCell>
        {NAV.map((n) => (
          <NavItem key={n.name}>{n.icon}{n.name}</NavItem>
        ))}
      </BottomBar>

      <SystemNav>
        <button aria-label="后退">
          <svg width="52" height="52" viewBox="0 0 52 52" fill="none" stroke="#888" strokeWidth="4.500" strokeLinejoin="round">
            <path d="M44 3v46L5 26z" />
          </svg>
        </button>
        <button aria-label="主页">
          <svg width="52" height="52" viewBox="0 0 52 52" fill="none" stroke="#888" strokeWidth="4.500"><circle cx="26" cy="26" r="23" /></svg>
        </button>
        <button aria-label="最近任务">
          <svg width="52" height="52" viewBox="0 0 52 52" fill="none" stroke="#888" strokeWidth="4.500"><rect x="5" y="5" width="42" height="42" rx="2" /></svg>
        </button>
      </SystemNav>
    </Page>
  );
}
